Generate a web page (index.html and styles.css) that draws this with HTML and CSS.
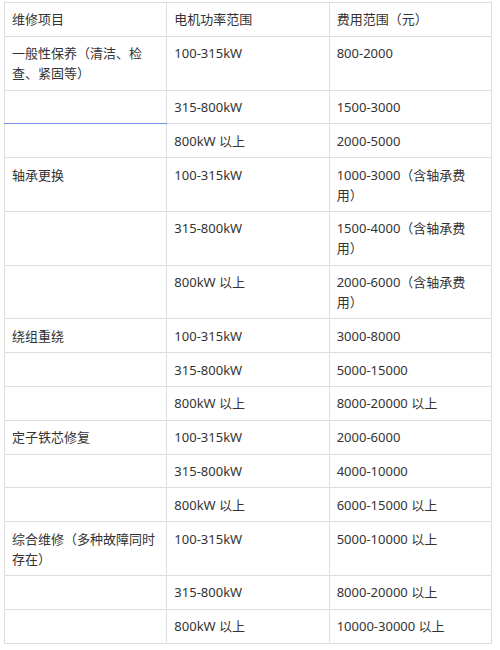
FILE: index.html
```html
<!DOCTYPE html>
<html lang="zh">
<head>
<meta charset="utf-8">
<link rel="stylesheet" href="styles.css">
</head>
<body>
<table class="price-table">
  <tr><td>维修项目</td><td>电机功率范围</td><td>费用范围（元）</td></tr>
  <tr><td>一般性保养（清洁、检查、紧固等）</td><td>100-315kW</td><td>800-2000</td></tr>
  <tr><td class="sel"></td><td>315-800kW</td><td>1500-3000</td></tr>
  <tr><td></td><td>800kW 以上</td><td>2000-5000</td></tr>
  <tr><td>轴承更换</td><td>100-315kW</td><td>1000-3000（含轴承费用）</td></tr>
  <tr><td></td><td>315-800kW</td><td>1500-4000（含轴承费用）</td></tr>
  <tr><td></td><td>800kW 以上</td><td>2000-6000（含轴承费用）</td></tr>
  <tr><td>绕组重绕</td><td>100-315kW</td><td>3000-8000</td></tr>
  <tr><td></td><td>315-800kW</td><td>5000-15000</td></tr>
  <tr><td></td><td>800kW 以上</td><td>8000-20000 以上</td></tr>
  <tr><td>定子铁芯修复</td><td>100-315kW</td><td>2000-6000</td></tr>
  <tr><td></td><td>315-800kW</td><td>4000-10000</td></tr>
  <tr><td></td><td>800kW 以上</td><td>6000-15000 以上</td></tr>
  <tr><td>综合维修（多种故障同时存在）</td><td>100-315kW</td><td>5000-10000 以上</td></tr>
  <tr><td></td><td>315-800kW</td><td>8000-20000 以上</td></tr>
  <tr><td></td><td>800kW 以上</td><td>10000-30000 以上</td></tr>
</table>
</body>
</html>
```
FILE: styles.css
```css
html, body {
  background: #ffffff;
}
body {
  margin: 2px 0 0 4px;
  font-family: "Noto Sans", "Noto Sans CJK SC", sans-serif;
  font-size: 13px;
  color: #333333;
}
.price-table {
  border-collapse: collapse;
  table-layout: fixed;
  width: 488px;
}
.price-table td {
  width: 33.33%;
  border: 1px solid #dedede;
  padding: 6.4px 8px 6.4px 7px;
  line-height: 20px;
  vertical-align: top;
  text-align: left;
}
.price-table td.sel {
  border-bottom: 1px solid #6f8ee6;
}
```
